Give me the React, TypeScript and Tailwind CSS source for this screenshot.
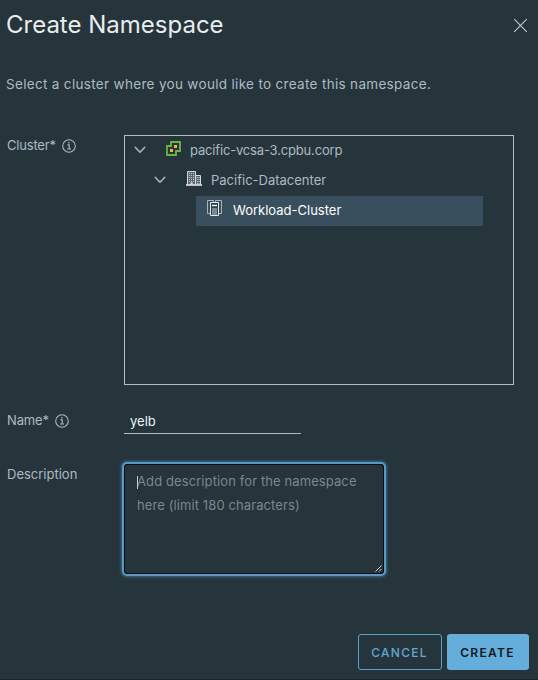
function InfoIcon() {
  return (
    <svg className="size-[14px] shrink-0" viewBox="0 0 14 14" fill="none" stroke="#adbbc4">
      <circle cx="7" cy="7" r="6.3" strokeWidth="1.05" />
      <path d="M5.5 5.9h1.7v4M5.2 10h3.8" strokeWidth="1.1" />
      <circle cx="6.9" cy="3.7" r=".8" fill="#adbbc4" stroke="none" />
    </svg>
  );
}

function Caret() {
  return (
    <svg className="h-[8px] w-[12px] shrink-0" viewBox="0 0 12 8" fill="none">
      <path d="M1.2 1.3 6 6.3l4.8-5" stroke="#adbbc4" strokeWidth="1.5" strokeLinecap="round" strokeLinejoin="round" />
    </svg>
  );
}

function VcenterIcon() {
  return (
    <svg className="h-[15px] w-[15px] shrink-0" viewBox="0 0 15 15" fill="none">
      <path d="M5 1h9v9h-4v4H1V5h4z" stroke="#6db33f" strokeWidth="1.8" />
      <path d="M8 4h3v3H8zM4 8h3v3H4z" fill="#f6b044" />
    </svg>
  );
}

function DatacenterIcon() {
  return (
    <svg className="h-[15px] w-[16px] shrink-0" viewBox="0 0 16 15" fill="none">
      <path d="M1 1h9v13H1zM9.5 4.5h5V14h-5z" fill="#59666e" />
      <path d="M1.5 13.5V.5h8v13M9.5 4.5h5v9" stroke="#d5dadd" />
      <path d="M0 14h16" stroke="#e2e5e7" strokeWidth="1.6" />
      <path d="M3.5 2v9M5.5 2v9M7.5 2v9M11.3 6v7M13 6v7" stroke="#c6cdd1" strokeWidth="1" strokeDasharray="1 1" />
      <path d="M4.5 11.5h2.2v2H4.5z" fill="#e2e5e7" />
    </svg>
  );
}

function ClusterIcon() {
  return (
    <svg className="h-[16px] w-[15px] shrink-0" viewBox="0 0 15 16" fill="none">
      <path d="M3 13.5H.5V.5h6v2M12 13.5h2.5V.5h-6v2" stroke="#a9b4bc" />
      <path d="M3.5 2.5h8v13h-8z" stroke="#e6e9eb" fill="#304450" />
      <path d="M5 5.5h5" stroke="#fff" strokeWidth="1.3" />
      <path d="M5 8h5v7H5z" fill="#7d8790" />
    </svg>
  );
}

export default function App() {
  return (
    <main className="flex h-[680px] w-[538px] flex-col overflow-hidden border-b border-[#1b272d] bg-[#26343b] font-['Inter',sans-serif] text-[13px] text-[#adbbc4]">
      <header className="flex h-[50px] shrink-0 items-center justify-between pr-[10px] pl-[6px]">
        <h1 className="text-[24px] leading-[30px] text-[#e9ecef]">Create Namespace</h1>
        <button aria-label="Close">
          <svg className="size-[15px]" viewBox="0 0 15 15">
            <path d="m1.2 1.2 12.6 12.6M13.8 1.2 1.2 13.8" stroke="#b7c4cc" strokeWidth="1.2" />
          </svg>
        </button>
      </header>
      <p className="mt-[24px] h-[20px] shrink-0 pl-[6px] text-[13.5px] leading-[20px] tracking-[0.32px] whitespace-nowrap">
        Select a cluster where you would like to create this namespace.
      </p>

      <section className="mt-[41px] flex h-[250px] shrink-0">
        <div className="flex h-[22px] w-[124px] items-center gap-[6px] pl-[7px]">
          <span className="tracking-[-0.2px]">Cluster*</span>
          <InfoIcon />
        </div>
        <div className="h-[250px] w-[390px] border border-[#b9bcbd] leading-[28px]">
          <div className="flex h-[30px] items-center pb-[2px] pl-[9px]">
            <Caret />
            <span className="ml-[20px] flex pb-[3px]"><VcenterIcon /></span>
            <span className="ml-[9px] tracking-[-0.17px]">pacific-vcsa-3.cpbu.corp</span>
          </div>
          <div className="flex h-[30px] items-center pb-[2px] pl-[29px]">
            <Caret />
            <span className="ml-[20px] flex pb-[3px]"><DatacenterIcon /></span>
            <span className="ml-[9px]">Pacific-Datacenter</span>
          </div>
          <div className="ml-[71px] flex h-[30px] w-[287px] items-center bg-[#394f5e] pb-[2px] pl-[11px] text-white">
            <span className="flex pb-[4px]"><ClusterIcon /></span>
            <span className="ml-[11px]">Workload-Cluster</span>
          </div>
        </div>
      </section>

      <section className="mt-[24px] flex h-[25px] shrink-0">
        <label htmlFor="name" className="flex h-[24px] w-[124px] items-center gap-[6px] pl-[7px]">
          <span className="tracking-[-0.15px]">Name*</span>
          <InfoIcon />
        </label>
        <input id="name" defaultValue="yelb" className="h-[25px] w-[177px] border-b border-[#adbbc4] px-[6px] text-[#f0f3f5] outline-none" />
      </section>

      <section className="mt-[30px] flex h-[110px] shrink-0">
        <label htmlFor="description" className="h-[21px] w-[124px] pl-[7px] leading-[21px]">Description</label>
        <div className="relative h-[110px] w-[260px]">
          <textarea
            id="description"
            placeholder={"Add description for the namespace\nhere (limit 180 characters)"}
            className="block h-full w-full resize-none rounded-[3px] border border-[#080d10] px-[12px] py-[4px] leading-[24px] tracking-[0.1px] shadow-[0_0_0_2px_#579bc2,0_0_3px_3px_#3c6a84] outline-none placeholder:text-[#7b878e]"
          />
          <span className="absolute top-[12px] left-[13px] h-[13px] w-px bg-[#c8d0d5]" />
          <svg className="absolute right-[2px] bottom-[2px] size-[7px]" viewBox="0 0 7 7">
            <path d="M.5 6.5l6-6M4 6.5 6.5 4" stroke="#c8ced2" strokeWidth="1" />
          </svg>
        </div>
      </section>

      <footer className="mt-[60px] flex h-[36px] shrink-0 justify-end gap-[5px] pr-[9px] text-[12px] font-semibold tracking-[1.3px]">
        <button className="h-[36px] w-[84px] rounded-[3px] border border-[#5aa2cb] pt-[2px] pr-[1px] font-medium text-[#5fa9d3]">CANCEL</button>
        <button className="h-[36px] w-[82px] rounded-[3px] bg-[#65addb] pt-[2px] pr-[1px] text-[#0b1a22]">CREATE</button>
      </footer>
    </main>
  );
}
